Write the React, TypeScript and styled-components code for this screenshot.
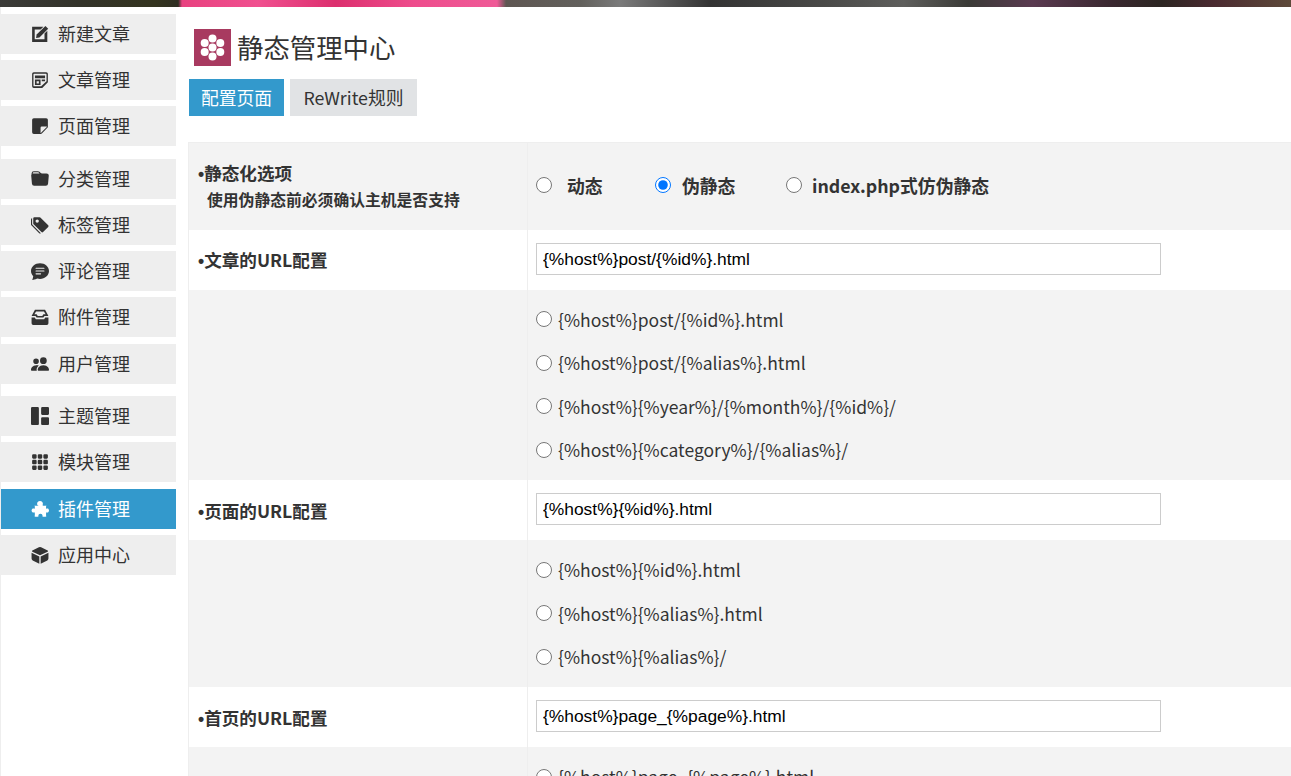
import React from 'react';
import styled, { createGlobalStyle } from 'styled-components';
import {
  BsStickyFill,
  BsFolderFill,
  BsTagsFill,
  BsChatTextFill,
  BsPeopleFill,
  BsGrid1X2Fill,
  BsGrid3X3GapFill,
} from 'react-icons/bs';

const FONT = '"Noto Sans CJK SC", "Noto Sans", sans-serif';

const GlobalStyle = createGlobalStyle`
  html, body {
    margin: 0;
    height: 100%;
    overflow: hidden;
    background: #fff;
  }
  body {
    font-family: ${FONT};
    color: #333;
  }
`;

const IconPencil: React.FC<{ size?: number }> = ({ size = 16 }) => (
  <svg width={size} height={size} viewBox="0 0 16 16" fill="currentColor">
    <path d="M1 1.500h10L8.500 4H3.300v8.700h8.700V7.500L14.500 5V15H1z" />
    <path d="M12.800.8 15.300 3.300 7.500 11 4.500 11.500 5 8.500z" />
  </svg>
);

const IconPosts: React.FC<{ size?: number }> = ({ size = 16 }) => (
  <svg width={size} height={size} viewBox="0 0 16 16" fill="currentColor">
    <path d="M2.500 1h11A1.500 1.500 0 0 1 15 2.500V10l-5 5H2.500A1.500 1.500 0 0 1 1 13.500V2.500A1.500 1.500 0 0 1 2.500 1zm.2 1.500a.5.5 0 0 0-.5.500v10a.5.5 0 0 0 .5.500h6.300L13.800 9V3a.5.5 0 0 0-.5-.500z" />
    <path d="M3.500 4h9v2.500h-9zM3.500 7.500h5v5h-5zM5 9v2h2V9zM9.500 7.500h3V9h-3z" fillRule="evenodd" />
  </svg>
);

const IconInbox: React.FC<{ size?: number }> = ({ size = 16 }) => (
  <svg width={size} height={size} viewBox="0 0 16 16" fill="currentColor">
    <path d="M3.500 1.500h9L15.500 7H12l-1 1.500H5L4 7H.5zM4.500 3 3 5.500h2l1 1.500h4l1-1.500h2L11.500 3z" fillRule="evenodd" />
    <path d="M.5 8.500h2.800l1 1.500h7.400l1-1.500h2.800v5A1.500 1.500 0 0 1 14 15H2A1.500 1.500 0 0 1 .5 13.500z" />
  </svg>
);

const IconBox: React.FC<{ size?: number }> = ({ size = 16 }) => (
  <svg width={size} height={size} viewBox="0 0 16 16" fill="currentColor">
    <path d="M7 1.200a2.200 2.200 0 0 1 2 0l5.800 2.800a.6.6 0 0 1 0 1L8 8.300 1.200 5a.6.6 0 0 1 0-1z" />
    <path d="M.5 6 7.400 9.400V15.700L1.500 12.800A1.800 1.800 0 0 1 .5 11.200zM15.500 6 8.600 9.400V15.700L14.500 12.800A1.800 1.800 0 0 0 15.500 11.200z" />
  </svg>
);

const IconPuzzle: React.FC<{ size?: number }> = ({ size = 16 }) => (
  <svg width={size} height={size} viewBox="0 0 16 16" fill="currentColor">
    <path d="M5.800 4.600C5 3.400 5.400.8 8 .8s3 2.600 2.200 3.800c.8.600 2.200.6 3.400.2-.3 1.200-.3 2.300 0 3.100 1-.7 2.400-.1 2.400 1.500s-1.400 2.200-2.400 1.500c-.3 1.200-.3 2.600 0 3.800-1.200.3-2.500.3-3.500 0 .5-1.300-.3-2.500-1.700-2.500s-2.200 1.200-1.700 2.500c-1.200.3-2.400.3-3.500 0 .3-1.200.3-2.600 0-3.800-1 .7-2.700.1-2.700-1.500s1.700-2.200 2.700-1.500c.3-.8.300-1.900 0-3.100 1.200.4 2.800.4 3.600-.2z" />
  </svg>
);

const menuGroups = [
  [
    { label: '新建文章', icon: IconPencil },
    { label: '文章管理', icon: IconPosts },
    { label: '页面管理', icon: BsStickyFill },
  ],
  [
    { label: '分类管理', icon: BsFolderFill },
    { label: '标签管理', icon: BsTagsFill },
    { label: '评论管理', icon: BsChatTextFill },
    { label: '附件管理', icon: IconInbox },
    { label: '用户管理', icon: BsPeopleFill },
  ],
  [
    { label: '主题管理', icon: BsGrid1X2Fill },
    { label: '模块管理', icon: BsGrid3X3GapFill },
    { label: '插件管理', icon: IconPuzzle, active: true },
    { label: '应用中心', icon: IconBox },
  ],
];

const sections = [
  {
    title: '文章的URL配置',
    value: '{%host%}post/{%id%}.html',
    options: [
      '{%host%}post/{%id%}.html',
      '{%host%}post/{%alias%}.html',
      '{%host%}{%year%}/{%month%}/{%id%}/',
      '{%host%}{%category%}/{%alias%}/',
    ],
  },
  {
    title: '页面的URL配置',
    value: '{%host%}{%id%}.html',
    options: ['{%host%}{%id%}.html', '{%host%}{%alias%}.html', '{%host%}{%alias%}/'],
  },
  {
    title: '首页的URL配置',
    value: '{%host%}page_{%page%}.html',
    options: ['{%host%}page_{%page%}.html'],
  },
];

const App: React.FC = () => {
  return (
    <>
      <GlobalStyle />
      <Banner />
      <Layout>
        <Sidebar>
          {menuGroups.map((group, i) => (
            <MenuGroup key={i}>
              {group.map((item) => (
                <MenuItem key={item.label} $active={item.active}>
                  <IconSlot>
                    <item.icon size={18} />
                  </IconSlot>
                  <span>{item.label}</span>
                </MenuItem>
              ))}
            </MenuGroup>
          ))}
        </Sidebar>
        <Main>
          <Title>
            <Logo viewBox="0 0 37 37">
              <rect width="37" height="37" fill="#a83a60" />
              <g fill="#fff">
                <circle cx="18.5" cy="18.5" r="4" />
                <circle cx="18.5" cy="9.500" r="4" />
                <circle cx="18.5" cy="27.500" r="4" />
                <circle cx="10.700" cy="14" r="4" />
                <circle cx="26.300" cy="14" r="4" />
                <circle cx="10.700" cy="23" r="4" />
                <circle cx="26.300" cy="23" r="4" />
              </g>
            </Logo>
            <h1>静态管理中心</h1>
          </Title>
          <Tabs>
            <Tab $active $width={95}>配置页面</Tab>
            <Tab $width={127}>ReWrite规则</Tab>
          </Tabs>
          <ConfigTable>
            <colgroup>
              <col style={{ width: 339 }} />
              <col />
            </colgroup>
            <tbody>
              <HeadRow>
                <LabelCell>
                  <strong><Bullet>•</Bullet>静态化选项</strong>
                  <Hint>使用伪静态前必须确认主机是否支持</Hint>
                </LabelCell>
                <RaisedCell>
                  <ModeOptions>
                    <ModeLabel $width={119} $gap={15}>
                      <Radio type="radio" name="mode" />
                      动态
                    </ModeLabel>
                    <ModeLabel $width={131} $gap={11}>
                      <Radio type="radio" name="mode" defaultChecked />
                      伪静态
                    </ModeLabel>
                    <ModeLabel $gap={10}>
                      <Radio type="radio" name="mode" />
                      index.php式仿伪静态
                    </ModeLabel>
                  </ModeOptions>
                </RaisedCell>
              </HeadRow>
              {sections.map((section) => (
                <React.Fragment key={section.title}>
                  <InputRow>
                    <LabelCell>
                      <strong><Bullet>•</Bullet>{section.title}</strong>
                    </LabelCell>
                    <RaisedCell>
                      <UrlInput type="text" defaultValue={section.value} />
                    </RaisedCell>
                  </InputRow>
                  <OptionsRow>
                    <LabelCell />
                    <OptionsCell>
                      {section.options.map((option) => (
                        <OptionLine key={option}>
                          <Radio type="radio" name={section.title} />
                          {option}
                        </OptionLine>
                      ))}
                    </OptionsCell>
                  </OptionsRow>
                </React.Fragment>
              ))}
            </tbody>
          </ConfigTable>
        </Main>
      </Layout>
    </>
  );
};

export default App;

const Banner = styled.div`
  height: 7px;
  background: linear-gradient(
    90deg,
    #3b3b38 0%,
    #33332a 6%,
    #34341f 12%,
    #2e2e22 13.8%,
    #e8417f 14.1%,
    #f0508f 20%,
    #dc2f6e 26%,
    #ee4c8c 32%,
    #ef5a97 38.5%,
    #5e5652 39.2%,
    #62605c 45%,
    #7a7a7a 48%,
    #333 55%,
    #4a4a48 64%,
    #5e5e5c 70%,
    #3a3a36 75%,
    #5a3a50 80%,
    #3a2830 86%,
    #2c2622 90%,
    #4a2a30 94%,
    #5e4a3a 100%
  );
`;

const Layout = styled.div`
  display: flex;
  height: 769px;
  overflow: hidden;
`;

const Sidebar = styled.nav`
  flex: 0 0 177px;
  box-sizing: border-box;
  padding: 7px 0 0 1px;
  display: flex;
  flex-direction: column;
  gap: 12.5px;
  border-left: 1px solid #eee;
`;

const MenuGroup = styled.div`
  display: flex;
  flex-direction: column;
  gap: 6.2px;
`;

const IconSlot = styled.span`
  display: flex;
  align-items: center;
  justify-content: center;
  width: 18px;
  height: 18px;
`;

const MenuItem = styled.a<{ $active?: boolean }>`
  display: flex;
  align-items: center;
  gap: 9px;
  height: 40px;
  width: 175px;
  margin-left: -1px;
  padding-left: 30px;
  box-sizing: border-box;
  font-size: 18px;
  color: ${(p) => (p.$active ? '#fff' : '#333')};
  background: ${(p) => (p.$active ? '#3399cc' : '#eeeeee')};

  > span:last-child {
    padding-bottom: 2px;
  }
`;

const Main = styled.main`
  flex: 1;
  min-width: 0;
  padding: 22px 0 0 11px;
`;

const Title = styled.div`
  display: flex;
  align-items: center;
  gap: 6px;
  margin-left: 6px;
  height: 37px;

  h1 {
    margin: 0 0 3px;
    font-size: 26.4px;
    font-weight: 400;
    color: #333;
  }
`;

const Logo = styled.svg`
  width: 37px;
  height: 37px;
`;

const Tabs = styled.div`
  display: flex;
  gap: 6px;
  margin: 13px 0 0 1px;
`;

const Tab = styled.div<{ $active?: boolean; $width: number }>`
  width: ${(p) => p.$width}px;
  height: 37px;
  line-height: 36px;
  text-align: center;
  font-size: 17.8px;
  color: ${(p) => (p.$active ? '#fff' : '#333')};
  background: ${(p) => (p.$active ? '#3399cc' : '#e1e3e5')};
`;

const ConfigTable = styled.table`
  margin-top: 26px;
  width: 1110px;
  table-layout: fixed;
  border-collapse: collapse;
  border: 1px solid #eee;
  border-right: 0;
`;

const LabelCell = styled.td`
  padding: 2px 0 0 9px;
  font-size: 17.6px;
  vertical-align: middle;
  border-right: 1px solid #eee;
  color: #333;

  strong {
    display: block;
    font-weight: 700;
    line-height: 24px;
  }
`;

const Bullet = styled.span`
  font-family: "Liberation Sans", Arial, sans-serif;
`;

const Hint = styled.span`
  display: block;
  margin-left: 9px;
  font-size: 15.8px;
  line-height: 28px;
  font-weight: 700;
`;

const ValueCell = styled.td`
  padding: 0 0 0 8px;
  vertical-align: middle;
`;

const RaisedCell = styled(ValueCell)`
  padding-bottom: 2px;
`;

const HeadRow = styled.tr`
  height: 87px;
  background: #f3f3f3;
`;

const InputRow = styled.tr`
  height: 60px;
  background: #fff;
`;

const OptionsRow = styled.tr`
  background: #f3f3f3;
`;

const OptionsCell = styled(ValueCell)`
  padding-top: 8px;
  padding-bottom: 8.5px;
`;

const ModeOptions = styled.div`
  display: flex;
  align-items: center;
`;

const ModeLabel = styled.label<{ $width?: number; $gap: number }>`
  display: flex;
  align-items: center;
  gap: ${(p) => p.$gap}px;
  width: ${(p) => (p.$width ? `${p.$width}px` : 'auto')};
  font-size: 17.8px;
  font-weight: 700;
  color: #333;
`;

const Radio = styled.input`
  width: 16px;
  height: 16px;
  margin: 0;
  flex: none;
`;

const OptionLine = styled.label`
  display: flex;
  align-items: center;
  gap: 6px;
  height: 43.5px;
  font-size: 17.5px;
  color: #333;
`;

const UrlInput = styled.input`
  display: block;
  box-sizing: border-box;
  width: 625px;
  height: 32px;
  padding: 1px 6px 0;
  font-family: "Liberation Sans", Arial, sans-serif;
  font-size: 17.4px;
  color: #000;
  background: #fff;
  border: 1px solid #ccc;
  border-radius: 0;
  outline: none;
`;
